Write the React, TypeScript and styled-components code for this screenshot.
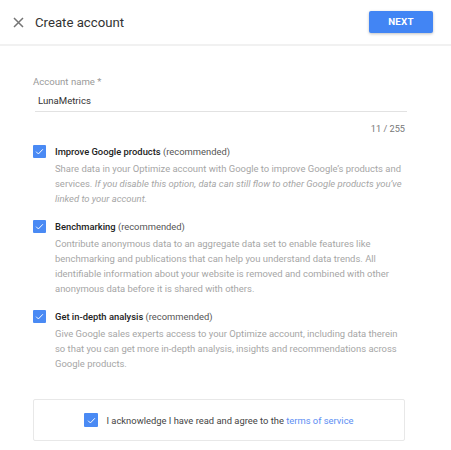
import React from 'react';
import styled, { createGlobalStyle } from 'styled-components';

const GlobalStyle = createGlobalStyle`
  html, body {
    margin: 0;
    padding: 0;
    background: #fff;
    font-family: Roboto, "Liberation Sans", Arial, sans-serif;
  }
`;

const Page = styled.div`
  width: 451px;
  height: 450px;
  overflow: hidden;
  background: #fff;
`;

const Header = styled.div`
  height: 44px;
  display: flex;
  align-items: center;
  padding: 0 18px 0 12px;
  border-bottom: 2px solid #f1f1f1;
`;

const CloseButton = styled.button`
  width: 12px;
  height: 12px;
  padding: 0;
  border: 0;
  background: none;
  display: flex;
  align-items: center;
  justify-content: center;
  margin: 1px 11px 0 0;
  cursor: pointer;
`;

const Title = styled.h1`
  flex: 1;
  margin: 0;
  font-size: 13.2px;
  font-weight: 400;
  color: #333;
`;

const NextButton = styled.button`
  width: 64px;
  height: 22px;
  border: 0;
  border-radius: 2px;
  background: #4285f4;
  color: #fff;
  font-family: Roboto, "Liberation Sans", Arial, sans-serif;
  font-weight: 700;
  font-size: 9.8px;
  letter-spacing: 0.2px;
  box-shadow: 0 1px 3px rgba(0, 0, 0, 0.25);
  margin-top: -1px;
`;

const Body = styled.div`
  padding: 30px 44px 0 33px;
`;

const Field = styled.div`
  display: flex;
  flex-direction: column;
`;

const Label = styled.label`
  font-size: 9.6px;
  color: #9a9a9a;
  line-height: 12px;
`;

const Input = styled.div`
  font-size: 9.6px;
  color: #333;
  padding: 7px 0 4px 3px;
  line-height: 12px;
  border-bottom: 1px solid #e2e2e2;
  margin-left: 2px;
`;

const Counter = styled.div`
  align-self: flex-end;
  font-size: 9.2px;
  line-height: 12px;
  color: #777;
  margin-top: 11px;
  margin-right: 2px;
`;

const Option = styled.div<{ $top: number }>`
  display: flex;
  align-items: flex-start;
  margin-top: ${({ $top }) => $top}px;
`;

const Box = styled.span`
  width: 13px;
  height: 13px;
  flex-shrink: 0;
  border-radius: 1px;
  background: #4a8af4;
  display: flex;
  align-items: center;
  justify-content: center;
`;

const OptionText = styled.div`
  margin-left: 9px;
`;

const OptionTitle = styled.div`
  font-size: 9.4px;
  line-height: 13px;
  color: #333;
  b {
    font-weight: 500;
    color: #222;
  }
  span {
    color: #555;
  }
`;

const Desc = styled.p`
  margin: 3px 0 0;
  font-size: 9.45px;
  line-height: 15px;
  color: #a6a6a6;
  em {
    font-style: italic;
  }
`;

const AckCard = styled.div`
  margin-top: 28px;
  width: 372px;
  height: 42px;
  box-sizing: border-box;
  border: 1px solid #e8e8e8;
  border-radius: 2px;
  display: flex;
  align-items: center;
  justify-content: center;
  gap: 8px;
  font-size: 9.4px;
  color: #444;
`;

const AckBox = styled(Box)`
  width: 14px;
  height: 14px;
`;

const Link = styled.a`
  color: #5b8ef3;
  text-decoration: none;
`;

const CheckMark = () => (
  <svg width="9" height="9" viewBox="0 0 24 24">
    <path d="M3 12.5l6 6L21 6" fill="none" stroke="#fff" strokeWidth="2.6" />
  </svg>
);

const options = [
  {
    title: 'Improve Google products',
    top: 10,
    desc: (
      <>
        Share data in your Optimize account with Google to improve Google’s products and services.{' '}
        <em>If you disable this option, data can still flow to other Google products you’ve linked to your account.</em>
      </>
    ),
  },
  {
    title: 'Benchmarking',
    top: 14,
    desc: (
      <>
        Contribute anonymous data to an aggregate data set to enable features like benchmarking and
        publications that can help you understand data trends. All identifiable information about your
        website is removed and combined with other anonymous data before it is shared with others.
      </>
    ),
  },
  {
    title: 'Get in-depth analysis',
    top: 14,
    desc: (
      <>
        Give Google sales experts access to your Optimize account, including data therein so that you can
        get more in-depth analysis, insights and recommendations across Google products.
      </>
    ),
  },
];

export default function App() {
  return (
    <Page>
      <GlobalStyle />
      <Header>
        <CloseButton aria-label="Close">
          <svg width="11" height="11" viewBox="0 0 11 11">
            <path d="M1 1L10 10M10 1L1 10" stroke="#757575" strokeWidth="1.5" />
          </svg>
        </CloseButton>
        <Title>Create account</Title>
        <NextButton>NEXT</NextButton>
      </Header>
      <Body>
        <Field>
          <Label>Account name *</Label>
          <Input>LunaMetrics</Input>
          <Counter>11 / 255</Counter>
        </Field>
        {options.map((o) => (
          <Option key={o.title} $top={o.top}>
            <Box>
              <CheckMark />
            </Box>
            <OptionText>
              <OptionTitle>
                <b>{o.title}</b> <span>(recommended)</span>
              </OptionTitle>
              <Desc>{o.desc}</Desc>
            </OptionText>
          </Option>
        ))}
        <AckCard>
          <AckBox>
            <CheckMark />
          </AckBox>
          <span>
            I acknowledge I have read and agree to the <Link href="#">terms of service</Link>
          </span>
        </AckCard>
      </Body>
    </Page>
  );
}
